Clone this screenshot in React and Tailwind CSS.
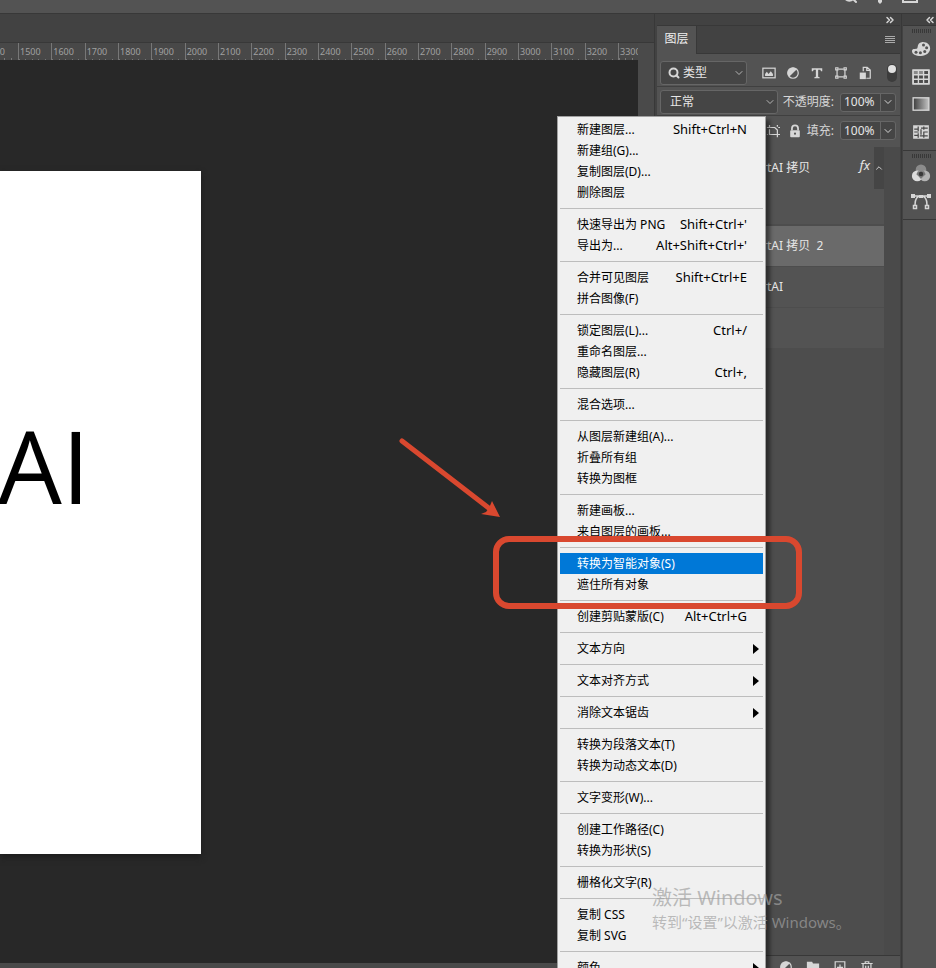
import { Fragment, useState } from "react";
import { ChevronDown, ChevronUp, ChevronsLeft, ChevronsRight, Search } from "lucide-react";

const MENU = [
  [["新建图层...", "Shift+Ctrl+N"], ["新建组(G)..."], ["复制图层(D)..."], ["删除图层"]],
  [["快速导出为 PNG", "Shift+Ctrl+'"], ["导出为...", "Alt+Shift+Ctrl+'"]],
  [["合并可见图层", "Shift+Ctrl+E"], ["拼合图像(F)"]],
  [["锁定图层(L)...", "Ctrl+/"], ["重命名图层..."], ["隐藏图层(R)", "Ctrl+,"]],
  [["混合选项..."]],
  [["从图层新建组(A)..."], ["折叠所有组"], ["转换为图框"]],
  [["新建画板..."], ["来自图层的画板..."]],
  [["转换为智能对象(S)"], ["遮住所有对象"]],
  [["创建剪贴蒙版(C)", "Alt+Ctrl+G"]],
  [["文本方向", "sub"]],
  [["文本对齐方式", "sub"]],
  [["消除文本锯齿", "sub"]],
  [["转换为段落文本(T)"], ["转换为动态文本(D)"]],
  [["文字变形(W)..."]],
  [["创建工作路径(C)"], ["转换为形状(S)"]],
  [["栅格化文字(R)"]],
  [["复制 CSS"], ["复制 SVG"]],
  [["颜色", "sub"]],
];

const MARKS = Array.from({ length: 18 }, (_, i) => 1500 + i * 100);

function Icon({ size = 14, children }) {
  return (
    <svg width={size} height={size} viewBox="0 0 16 16" fill="none" stroke="currentColor" strokeWidth="1.4">
      {children}
    </svg>
  );
}

function ImageIcon() {
  return (
    <Icon>
      <rect x="1" y="2.5" width="14" height="11" />
      <path d="M3.5 11.5V9l2-2.5 2 2.5 2.5-3 2.5 3v2.5z" fill="currentColor" stroke="none" />
    </Icon>
  );
}

function AdjustIcon() {
  return (
    <Icon>
      <circle cx="8" cy="8" r="6" />
      <path d="M3.6 12.4A6.2 6.2 0 0 1 12.4 3.6z" fill="currentColor" stroke="none" />
    </Icon>
  );
}

function TypeIcon() {
  return (
    <Icon>
      <path d="M2 2.5h12V6h-1.4l-.8-1.6H9.3v8l1.7.5v1H5v-1l1.7-.5v-8H4.2L3.4 6H2z" fill="currentColor" stroke="none" />
    </Icon>
  );
}

function ShapeIcon() {
  return (
    <Icon>
      <path d="M3.5 4.5v7M12.5 4.5v7M5 3.5h6M5 12.5h6" />
      <path d="M2 2h2.5v2.5H2zM11.5 2H14v2.5h-2.5zM2 11.5h2.5V14H2zM11.5 11.5H14V14h-2.5z" />
    </Icon>
  );
}

function SmartIcon() {
  return (
    <Icon>
      <path d="M6 6V1.5h4.5l3.5 3V14H9.5M10 1.5V5h4" />
      <path d="M2 7.5h7V15H2z" fill="currentColor" stroke="none" />
    </Icon>
  );
}

function ArtboardLockIcon() {
  return (
    <Icon>
      <path d="M4 1v3M1 4h9l3 3v8M4 6v6h12M14 4h2M13 1v2M1 12h1" />
    </Icon>
  );
}

function LockIcon() {
  return (
    <Icon>
      <path d="M4.5 7V5a3.5 3.5 0 0 1 7 0v2" strokeWidth="2" />
      <rect x="2.5" y="7" width="11" height="8" rx="1" fill="currentColor" stroke="none" />
      <circle cx="8" cy="11" r="1.2" fill="#535353" stroke="none" />
    </Icon>
  );
}

function PaletteIcon() {
  return (
    <Icon size={20}>
      <path
        d="M8.5 2.5C12.5 2 15.3 4.500 15.3 7.500s-3 6-7.300 6S.8 12 .8 9.700 3 8 4.500 7.700 4.500 3 8.500 2.500z"
        fill="currentColor"
        stroke="none"
      />
      <g fill="#535353" stroke="none">
        <circle cx="4" cy="10.5" r="1.2" />
        <circle cx="7.5" cy="11" r="1.2" />
        <circle cx="11" cy="10" r="1.2" />
        <circle cx="12.5" cy="7" r="1.2" />
        <circle cx="10" cy="4.8" r="1.2" />
      </g>
    </Icon>
  );
}

function SwatchIcon() {
  return (
    <Icon size={18}>
      <rect x="1" y="2" width="14" height="12" fill="#4a4a4a" />
      <path d="M1 2h9v4H1z" fill="#8a8a8a" stroke="none" />
      <path d="M1 2h14v12H1zM1 6h14M1 10h14M5.7 2v12M10.3 2v12" strokeWidth="1.2" />
    </Icon>
  );
}

function GradientIcon() {
  return (
    <Icon size={18}>
      <defs>
        <linearGradient id="ramp">
          <stop offset="0" stopColor="#3c3c3c" />
          <stop offset="1" stopColor="#c4c4c4" />
        </linearGradient>
      </defs>
      <rect x="1" y="2.5" width="14" height="11" fill="url(#ramp)" strokeWidth="1.2" />
    </Icon>
  );
}

function PatternIcon() {
  return (
    <Icon size={18}>
      <rect x="1" y="2" width="14" height="12" fill="currentColor" stroke="none" />
      <path
        d="M5.500 3v4M5.500 9v4M10.500 3v3M10.500 8v5M8 5.500v5M2 5.500h4M8 4.500h6M2 8h4M10 8h4M2 11h3M7 11.500h7"
        stroke="#484848"
        strokeWidth="1.1"
      />
    </Icon>
  );
}

function ChannelsIcon() {
  return (
    <Icon size={20}>
      <g stroke="none">
        <circle cx="8" cy="5.5" r="4.3" fill="#8b8b8b" />
        <circle cx="5" cy="10.3" r="4.3" fill="#dcdcdc" />
        <circle cx="11" cy="10.3" r="4.3" fill="#b4b4b4" />
        <path d="M5.5 6.500h5l1.200 2.500L8 12.500 4.300 9z" fill="#787878" />
        <circle cx="8" cy="8.7" r="1.8" fill="#3a3a3a" />
      </g>
    </Icon>
  );
}

function PathIcon() {
  return (
    <svg width="22" height="18" viewBox="0 0 22 18" fill="none" stroke="currentColor" strokeWidth="1.5">
      <path d="M2 4h18M5 13c0-5 2-9 6-9s6 4 6 9" />
      <path d="M1 2h4v4H1zM9 3h4v3H9zM17 2h4v4h-4z" fill="currentColor" stroke="none" />
      <path d="M3.5 13.5h3v3h-3zM15.5 13.5h3v3h-3z" />
    </svg>
  );
}

function FolderIcon() {
  return (
    <Icon>
      <path d="M1 2h6l1 2h7v11H1z" fill="currentColor" stroke="none" />
    </Icon>
  );
}

function NewIcon() {
  return (
    <Icon>
      <path d="M2.5 2h11v12h-11zM8 5v7M4.5 8.5h7" />
    </Icon>
  );
}

function TrashIcon() {
  return (
    <Icon>
      <path d="M1.5 4h13M6 4V2h4v2M3.5 4v11h9V4M6.5 6.5v6M9.5 6.5v6" />
    </Icon>
  );
}

function IconButton({ label, children }) {
  return (
    <button aria-label={label} className="flex shrink-0 items-center justify-center">
      {children}
    </button>
  );
}

function Ticks() {
  return (
    <div className="absolute inset-x-0 bottom-0 grid h-[2px] grid-cols-5">
      {[0, 1, 2, 3, 4].map((n) => (
        <i key={n} className="border-l border-[#777777]" />
      ))}
    </div>
  );
}

function Ruler() {
  return (
    <div className="mr-4 flex h-[17px] shrink-0 overflow-hidden bg-[#484848] text-[9px] leading-[18px] text-[#a0a0a0]">
      <div className="relative flex w-[18px] shrink-0 justify-end overflow-hidden pr-[13px]">
        1400
        <div className="absolute right-0 bottom-0 flex h-[2px] gap-[6px]">
          <i className="border-l border-[#777777]" />
          <i className="border-l border-[#777777]" />
          <i />
        </div>
      </div>
      <div className="grid w-[600px] shrink-0 grid-cols-18">
        {MARKS.map((m) => (
          <div key={m} className="relative border-l border-[#777777] pl-px">
            {m}
            <Ticks />
          </div>
        ))}
      </div>
      <div className="relative w-[33px] shrink-0 border-l border-[#777777] pl-px">
        3300
        <Ticks />
      </div>
    </div>
  );
}

function Document() {
  return (
    <main className="flex min-w-0 flex-1 flex-col bg-[#4a4a4a]">
      <div className="h-[29px] shrink-0 border-b border-[#383838] bg-[#424242]" />
      <Ruler />
      <div className="mr-4 mb-[5px] flex min-h-0 flex-1 items-start bg-[#282828] pt-[111px]">
        <div className="flex h-[683px] w-[201px] items-start justify-end overflow-hidden bg-white pt-[244px] pr-[111px] shadow-[0_3px_6px_#1c1c1c]">
          <span className="font-['Open_Sans'] text-[101px] leading-none font-medium text-black">AI</span>
        </div>
      </div>
    </main>
  );
}

function Dropdown({ label, value, className, search }) {
  return (
    <label className={`relative flex h-6 items-center rounded-[3px] border border-[#666666] bg-[#454545] ${className}`}>
      {search && <Search size={12} strokeWidth={4} className="pointer-events-none absolute left-[7px]" />}
      <select
        aria-label={label}
        defaultValue={value}
        className={`h-full w-full appearance-none bg-transparent text-[#e6e6e6] outline-none ${search ? "pl-[22px]" : "pl-[9px]"}`}
      >
        <option>{value}</option>
      </select>
      <ChevronDown size={12} className="pointer-events-none absolute right-[1px] text-[#b5b5b5]" />
    </label>
  );
}

function Percent({ id, label }) {
  return (
    <div className="ml-auto flex items-center gap-[6px]">
      <label htmlFor={id}>{label}:</label>
      <div className="flex h-[19px] rounded-[3px] border border-[#666666] bg-[#454545]">
        <input id={id} defaultValue="100%" className="w-[39px] bg-transparent pl-[3px] text-[#e6e6e6] outline-none" />
        <button aria-label={`${label}滑块`} className="flex w-[15px] items-center justify-center border-l border-[#666666]">
          <ChevronDown size={12} />
        </button>
      </div>
    </div>
  );
}

function LayersPanel() {
  return (
    <section className="mr-px ml-[2px] flex w-[243px] shrink-0 flex-col bg-[#535353]">
      <div className="flex h-3 shrink-0 items-center justify-end border-b border-[#383838] bg-[#424242] pr-1">
        <IconButton label="折叠面板">
          <ChevronsRight size={12} strokeWidth={3} />
        </IconButton>
      </div>
      <div className="flex h-7 shrink-0 items-stretch bg-[#424242]">
        <button className="w-[39px] bg-[#535353] pb-[2px] text-[#f0f0f0]">图层</button>
        <div className="flex flex-1 items-center justify-end border-b border-l border-[#383838] pr-[5px]">
          <button aria-label="面板菜单" className="flex w-[10px] flex-col gap-px">
            <i className="h-px bg-[#aaaaaa]" />
            <i className="h-px bg-[#aaaaaa]" />
            <i className="h-px bg-[#aaaaaa]" />
            <i className="h-px bg-[#aaaaaa]" />
          </button>
        </div>
      </div>

      <div className="flex h-[33px] shrink-0 items-center border-b border-[#404040] pt-[6px] pr-[3px] pl-[3px]">
        <Dropdown label="筛选" value="类型" className="w-[87px]" search />
        <div className="ml-[15px] flex gap-[10px]">
          <IconButton label="像素图层"><ImageIcon /></IconButton>
          <IconButton label="调整图层"><AdjustIcon /></IconButton>
          <IconButton label="文字图层"><TypeIcon /></IconButton>
          <IconButton label="形状图层"><ShapeIcon /></IconButton>
          <IconButton label="智能对象"><SmartIcon /></IconButton>
        </div>
        <button aria-label="打开筛选" className="ml-auto flex h-[18px] w-[10px] items-start justify-center rounded-full bg-[#3c3c3c] pt-px">
          <i className="size-2 rounded-full bg-[#e0e0e0]" />
        </button>
      </div>

      <div className="flex h-[29px] shrink-0 items-center border-b border-[#404040] pt-[2px] pr-1 pl-[3px]">
        <Dropdown label="混合模式" value="正常" className="w-[118px]" />
        <Percent id="opacity" label="不透明度" />
      </div>

      <div className="flex h-[31px] shrink-0 items-center pr-1 pb-[2px] pl-[109px]">
        <IconButton label="锁定画板"><ArtboardLockIcon /></IconButton>
        <span className="w-2" />
        <IconButton label="锁定全部"><LockIcon /></IconButton>
        <Percent id="fill" label="填充" />
      </div>

      <div className="flex min-h-0 flex-1 bg-[#4a4a4a]">
        <ul className="mr-4 flex flex-1 flex-col bg-[#4d4d4d] text-[#e6e6e6]">
          <li className="flex h-[77px] items-start bg-[#535353]">
            <span className="flex h-[42px] flex-1 items-center pl-[105px]">rtAI 拷贝</span>
            <span className="pt-[10px] pr-1 font-['Noto_Sans'] text-[13px] italic">fx</span>
            <button aria-label="折叠效果" className="flex h-[42px] w-[10px] items-center justify-center bg-[#454545]">
              <ChevronUp size={10} />
            </button>
          </li>
          <li className="mt-[2px] flex h-10 items-center bg-[#6a6a6a] pl-[105px] whitespace-pre">rtAI 拷贝  2</li>
          <li className="mt-px flex h-10 items-center bg-[#535353] pl-[105px]">rtAI</li>
          <li className="mt-px h-10 bg-[#535353]" />
        </ul>
      </div>

      <div className="flex h-[13px] shrink-0 items-start gap-[13px] overflow-hidden border-t border-[#383838] pt-1 pl-[122px]">
        <IconButton label="新建调整图层"><AdjustIcon /></IconButton>
        <IconButton label="新建图层组"><FolderIcon /></IconButton>
        <IconButton label="新图层"><NewIcon /></IconButton>
        <IconButton label="删除"><TrashIcon /></IconButton>
      </div>
    </section>
  );
}

function Grip() {
  return (
    <div className="mx-auto flex h-1 w-[19px] shrink-0 justify-between">
      {Array.from({ length: 10 }, (_, i) => (
        <i key={i} className="w-px bg-[#383838]" />
      ))}
    </div>
  );
}

function Dock() {
  return (
    <aside className="flex w-[33px] shrink-0 flex-col bg-[#535353]">
      <div className="flex h-3 shrink-0 items-center justify-end border-b border-[#383838] bg-[#424242]">
        <IconButton label="展开面板">
          <ChevronsLeft size={12} strokeWidth={3} />
        </IconButton>
      </div>
      <div className="flex h-[125px] flex-col border-b border-[#383838] pt-[3px] pl-[3px]">
        <Grip />
        <div className="grid flex-1 grid-rows-4 pt-[2px] pb-1">
          <IconButton label="颜色"><PaletteIcon /></IconButton>
          <IconButton label="色板"><SwatchIcon /></IconButton>
          <IconButton label="渐变"><GradientIcon /></IconButton>
          <IconButton label="图案"><PatternIcon /></IconButton>
        </div>
      </div>
      <div className="flex h-[69px] flex-col border-b border-[#383838] pt-[3px] pl-[3px]">
        <Grip />
        <div className="grid flex-1 grid-rows-2 pt-px pb-1">
          <IconButton label="通道"><ChannelsIcon /></IconButton>
          <IconButton label="路径"><PathIcon /></IconButton>
        </div>
      </div>
    </aside>
  );
}

function ContextMenu() {
  const [active, setActive] = useState("转换为智能对象(S)");

  return (
    <div
      role="menu"
      className="absolute top-[116px] right-[170px] w-[209px] border border-[#a0a0a0] bg-[#f0f0f0] p-[2px] text-black shadow-[4px_4px_4px_rgba(0,0,0,0.45)]"
    >
      {MENU.map((group, i) => (
        <Fragment key={group[0][0]}>
          {i > 0 && (
            <div className="flex h-[11px] items-center">
              <hr className="w-full border-[#bdbdbd]" />
            </div>
          )}
          {group.map(([label, hint]) => (
            <button
              key={label}
              role="menuitem"
              onMouseEnter={() => setActive(label)}
              className={`flex h-[21px] w-full items-center justify-between pl-[17px] ${hint === "sub" ? "pr-1" : "pr-4"} ${
                label === active ? "bg-[#0078d7] text-white" : ""
              }`}
            >
              <span>{label}</span>
              {hint === "sub" ? (
                <svg width="6" height="10" viewBox="0 0 6 10" fill="currentColor">
                  <path d="M0 0l6 5-6 5z" />
                </svg>
              ) : (
                <span className="text-[13px]">{hint}</span>
              )}
            </button>
          ))}
        </Fragment>
      ))}
    </div>
  );
}

export default function App() {
  return (
    <div className="relative flex h-screen flex-col overflow-hidden bg-[#424242] font-['Noto_Sans','Noto_Sans_CJK_SC',sans-serif] text-xs text-[#d6d6d6]">
      <header className="flex h-[14px] shrink-0 items-end justify-end gap-[14px] border-b border-[#383838] bg-[#535353] pr-[18px] pb-[9px]">
        <Search size={16} strokeWidth={3} />
        <svg width="16" height="16" viewBox="0 0 16 16" fill="currentColor">
          <path d="M6 0h4v14l-2 2-2-2z" />
        </svg>
        <svg width="16" height="16" viewBox="0 0 16 16" fill="none" stroke="currentColor" strokeWidth="2">
          <rect x="1" y="1" width="14" height="13" />
        </svg>
      </header>
      <div className="flex min-h-0 flex-1">
        <Document />
        <div className="w-px bg-[#383838]" />
        <LayersPanel />
        <div className="mr-px w-px bg-[#383838]" />
        <Dock />
      </div>

      <ContextMenu />

      <div className="pointer-events-none absolute top-[536px] right-[134px] h-[73px] w-[309px] rounded-2xl border-[6px] border-[#d9482f]" />
      <svg className="pointer-events-none absolute top-[436px] right-[434px]" width="106" height="84" viewBox="0 0 106 84">
        <path d="M6 5l88 68" stroke="#d9482f" strokeWidth="5" strokeLinecap="round" />
        <path d="M104 81L96 65l-3 7-3 4-5 2z" fill="#d9482f" />
      </svg>

      <div className="pointer-events-none absolute top-[884px] right-[84px] w-[200px] whitespace-nowrap text-[#a0a0a0]/70">
        <p className="text-xl leading-[28px]">激活 Windows</p>
        <p className="text-[15px] leading-[20px]">转到“设置”以激活 Windows。</p>
      </div>
    </div>
  );
}
